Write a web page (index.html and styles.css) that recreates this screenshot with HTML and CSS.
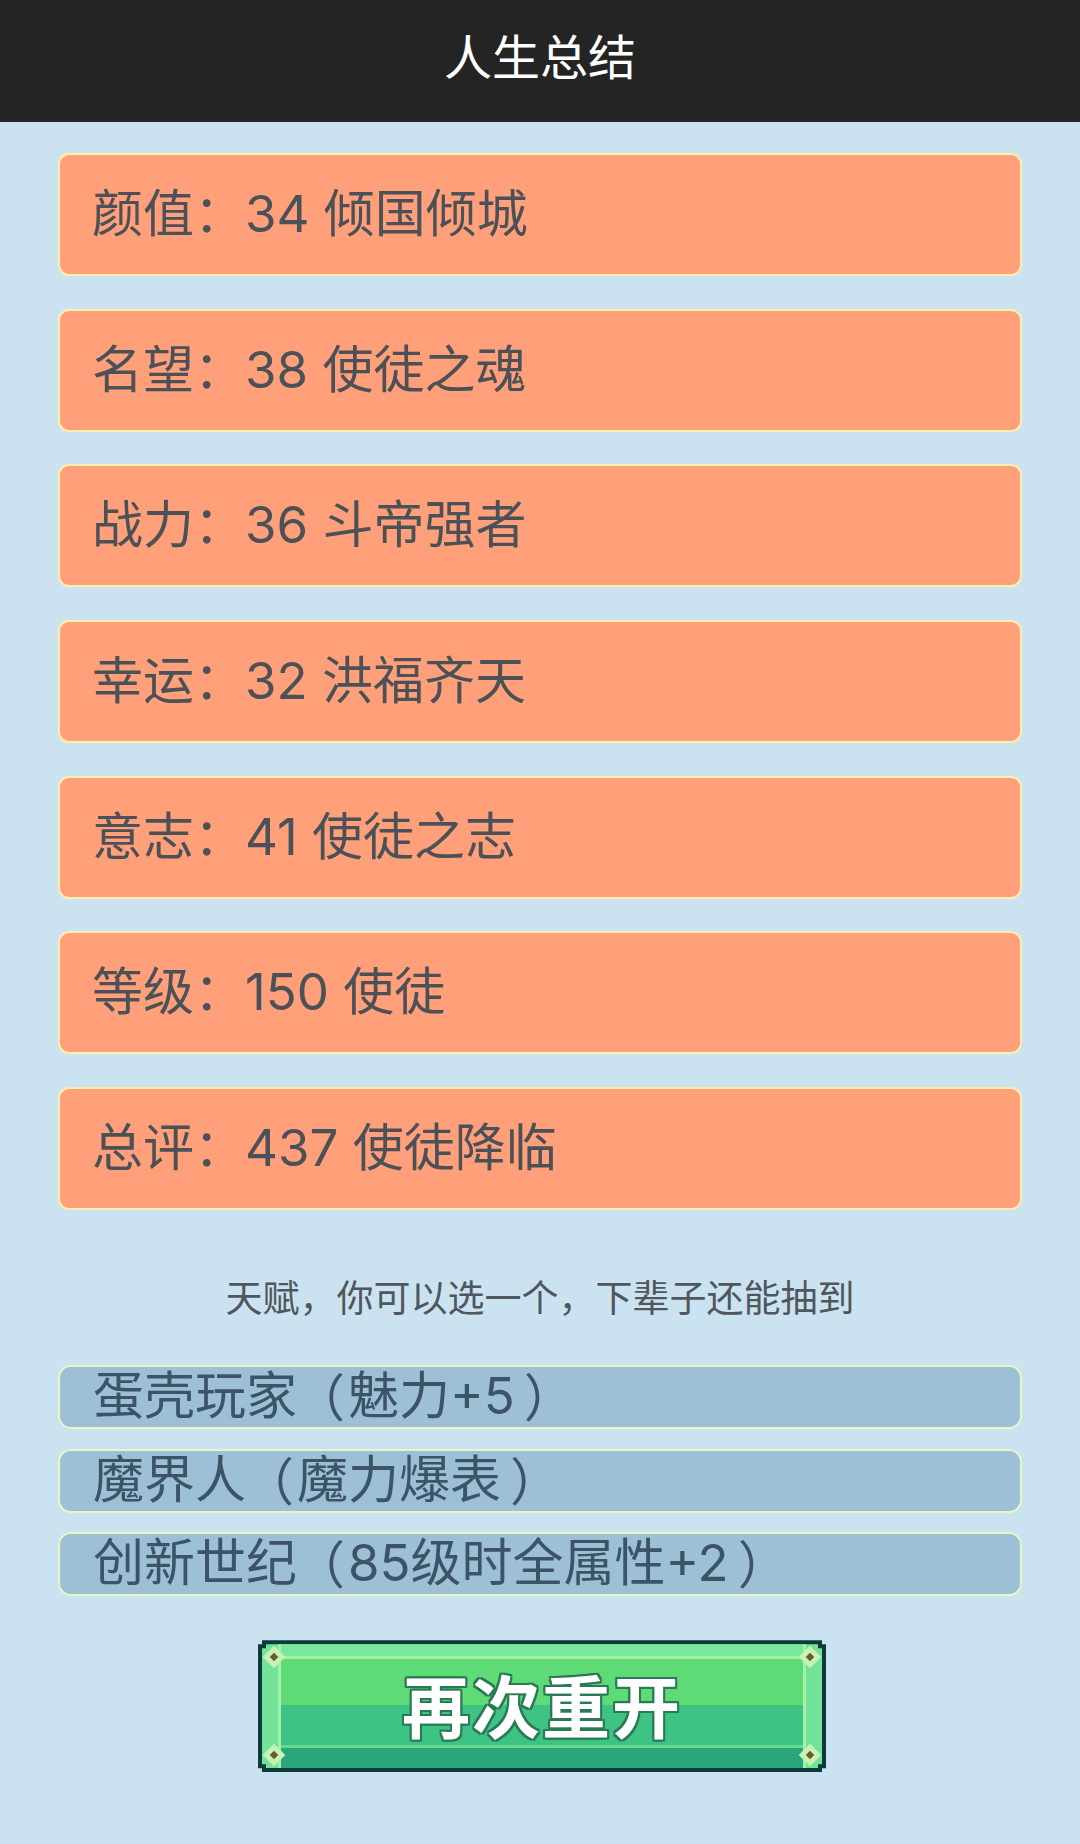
FILE: index.html
```html
<!DOCTYPE html>
<html lang="zh-CN">
<head>
<meta charset="utf-8">
<title>人生总结</title>
<link rel="stylesheet" href="styles.css">
</head>
<body>
<header class="topbar"><h1 class="title">人生总结</h1></header>
<main class="content">
  <section class="stats">
    <div class="stat">颜值：34 倾国倾城</div>
    <div class="stat">名望：38 使徒之魂</div>
    <div class="stat">战力：36 斗帝强者</div>
    <div class="stat">幸运：32 洪福齐天</div>
    <div class="stat">意志：41 使徒之志</div>
    <div class="stat">等级：150 使徒</div>
    <div class="stat">总评：437 使徒降临</div>
  </section>
  <p class="caption">天赋，你可以选一个，下辈子还能抽到</p>
  <section class="talents">
    <div class="talent">蛋壳玩家<span class="paren open">（</span>魅力+5<span class="paren close">）</span></div>
    <div class="talent">魔界人<span class="paren open">（</span>魔力爆表<span class="paren close">）</span></div>
    <div class="talent">创新世纪<span class="paren open">（</span>85级时全属性+2<span class="paren close">）</span></div>
  </section>
  <div class="btn-wrap">
    <div class="btn">
      <div class="btn-face">
        <div class="btn-core"><span class="btn-text">再次重开</span></div>
      </div>
      <span class="stud stud-tl"></span>
      <span class="stud stud-tr"></span>
      <span class="stud stud-bl"></span>
      <span class="stud stud-br"></span>
    </div>
  </div>
</main>
</body>
</html>
```
FILE: styles.css
```css
* { box-sizing: border-box; }
html, body {
  margin: 0;
  padding: 0;
}
body {
  width: 1080px;
  min-height: 1844px;
  background: #cbe3f1;
  font-family: "Inter", "Noto Sans CJK SC", "Noto Sans", sans-serif;
  text-spacing-trim: space-all;
}
.topbar {
  height: 122px;
  background: #242424;
  display: flex;
  align-items: center;
  justify-content: center;
}
.title {
  margin: 0;
  color: #ffffff;
  font-family: "Noto Sans CJK SC", sans-serif;
  font-size: 48px;
  font-weight: 400;
  line-height: 1;
  padding-bottom: 14px;
}
.content {
  padding: 31px 58px 0;
}
.stats {
  display: flex;
  flex-direction: column;
  gap: 32.7px;
}
.stat {
  height: 123px;
  background: #ffa07a;
  border: 2px solid #fbeeaf;
  border-radius: 11px;
  display: flex;
  align-items: center;
  padding-left: 32px;
  padding-bottom: 2px;
  font-size: 51px;
  color: #4b5157;
  line-height: 1;
}
.caption {
  margin: 68px 0 0;
  text-align: center;
  font-family: "Noto Sans CJK SC", sans-serif;
  font-size: 37px;
  line-height: 37px;
  color: #50575c;
}
.talents {
  margin-top: 50px;
  display: flex;
  flex-direction: column;
  gap: 19.5px;
}
.talent {
  height: 64px;
  background: #9ec0d6;
  border: 2px solid #e6f7c4;
  border-radius: 13px;
  display: flex;
  align-items: center;
  padding-left: 33px;
  padding-bottom: 3px;
  font-size: 51px;
  line-height: 1;
  color: #3c5466;
  white-space: pre;
}
.paren {
  display: inline-block;
  width: 1em;
  font-family: "Noto Sans CJK SC", sans-serif;
}
.paren.open {
  text-indent: -3px;
}
.paren.close {
  padding-left: 9px;
  width: calc(1em + 9px);
}
.btn-wrap {
  margin-top: 44px;
  display: flex;
  justify-content: center;
  padding-left: 4px;
}
.btn {
  position: relative;
  width: 568px;
  height: 132px;
  background: #0d3a3c;
  padding: 4px;
  clip-path: polygon(
    4px 0, calc(100% - 4px) 0, calc(100% - 4px) 4px, 100% 4px,
    100% calc(100% - 4px), calc(100% - 4px) calc(100% - 4px), calc(100% - 4px) 100%,
    4px 100%, 4px calc(100% - 4px), 0 calc(100% - 4px), 0 4px, 4px 4px);
}
.btn-face {
  height: 100%;
  background: #74e39a;
  padding: 0 16px;
  clip-path: polygon(
    4px 0, calc(100% - 4px) 0, calc(100% - 4px) 4px, 100% 4px,
    100% calc(100% - 4px), calc(100% - 4px) calc(100% - 4px), calc(100% - 4px) 100%,
    4px 100%, 4px calc(100% - 4px), 0 calc(100% - 4px), 0 4px, 4px 4px);
}
.btn-core {
  height: 100%;
  border-left: 3px solid #a3f0a6;
  border-right: 3px solid #a3f0a6;
  background: linear-gradient(to bottom,
    #7ae89c 0, #7ae89c 12px,
    #a3f0a6 12px, #a3f0a6 15px,
    #5edb76 15px, #5edb76 61px,
    #3dc485 61px, #3dc485 101px,
    #6ad990 101px, #6ad990 104px,
    #2ba67c 104px, #2ba67c 100%);
  display: flex;
  align-items: center;
  justify-content: center;
}
.btn-text {
  color: #ffffff;
  font-family: "Noto Sans CJK SC", sans-serif;
  font-size: 68px;
  font-weight: 700;
  line-height: 1;
  letter-spacing: 2px;
  margin-top: -4px;
  text-shadow:
    2px 0 0 #2a7a55, -2px 0 0 #2a7a55, 0 2px 0 #2a7a55, 0 -2px 0 #2a7a55,
    2px 2px 0 #2a7a55, -2px -2px 0 #2a7a55, 2px -2px 0 #2a7a55, -2px 2px 0 #2a7a55;
}
.stud {
  position: absolute;
  width: 16px;
  height: 16px;
  background: #c5f4b2;
  transform: rotate(45deg);
}
.stud::after {
  content: "";
  position: absolute;
  left: 5px;
  top: 5px;
  width: 6px;
  height: 6px;
  background: #6b5a2c;
}
.stud-tl { left: 8px; top: 9px; }
.stud-tr { right: 8px; top: 9px; }
.stud-bl { left: 8px; bottom: 9px; }
.stud-br { right: 8px; bottom: 9px; }
```
